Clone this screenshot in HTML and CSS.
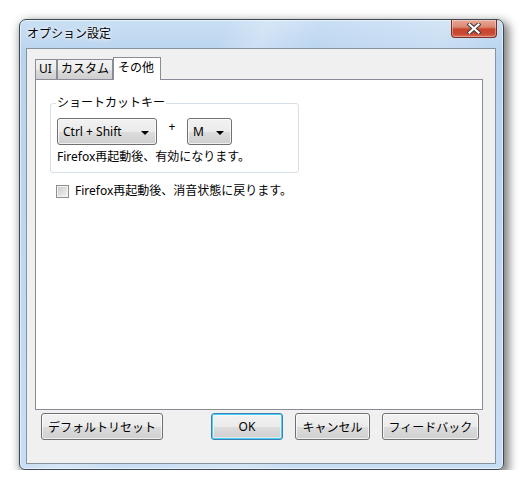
FILE: index.html
```html
<!DOCTYPE html>
<html lang="ja">
<head>
  <meta charset="UTF-8" />
  <title>オプション設定</title>
  <link rel="stylesheet" href="styles.css">
</head>
<body>
  <div class="window">
    <div class="titlebar">
      <span class="title">オプション設定</span>
      <button class="close" aria-label="閉じる">
        <svg width="14" height="11" viewBox="0 0 14 11">
          <path d="M2.5 1.5 L11.5 9.5 M11.5 1.5 L2.5 9.5" stroke="#3b3b3b" stroke-width="4.2" stroke-linecap="square"/>
          <path d="M2.5 1.5 L11.5 9.5 M11.5 1.5 L2.5 9.5" stroke="#ffffff" stroke-width="2.2" stroke-linecap="square"/>
        </svg>
      </button>
    </div>

    <div class="client">
      <div class="tabs">
        <div class="tab tab-ui">UI</div>
        <div class="tab tab-custom">カスタム</div>
        <div class="tab tab-other active">その他</div>
      </div>

      <div class="panel">
        <fieldset class="group">
          <legend>ショートカットキー</legend>
          <div class="keyRow">
            <div class="combo comboMod">Ctrl + Shift<span class="arrow"></span></div>
            <span class="plus">+</span>
            <div class="combo comboKey">M<span class="arrow"></span></div>
          </div>
          <p class="note">Firefox再起動後、有効になります。</p>
        </fieldset>

        <label class="check">
          <span class="box"></span>
          Firefox再起動後、消音状態に戻ります。
        </label>
      </div>

      <div class="footer">
        <button class="btn btnReset">デフォルトリセット</button>
        <button class="btn btnOk">OK</button>
        <button class="btn btnCancel">キャンセル</button>
        <button class="btn btnFeedback">フィードバック</button>
      </div>
    </div>
  </div>
</body>
</html>
```

FILE: styles.css
```css
* {
  margin: 0;
  padding: 0;
  box-sizing: border-box;
}

body {
  font-family: "Noto Sans", "Noto Sans CJK JP", sans-serif;
  font-size: 12px;
  color: #000000;
  background-color: #ffffff;
  padding: 19px 0 0 19px;
}

.window {
  display: flex;
  flex-direction: column;
  width: 485px;
  height: 451px;
  padding: 0 7px 5px 6px;
  border: 1px solid #3d4854;
  border-radius: 7px 7px 6px 6px;
  background:
    linear-gradient(115deg, rgba(255,255,255,0) 30%, rgba(255,255,255,0.25) 36%, rgba(255,255,255,0) 44%, rgba(255,255,255,0.2) 62%, rgba(255,255,255,0) 70%),
    linear-gradient(180deg, #c9dff4 0%, #b9d3ee 8%, #c0d8f1 60%, #c8def4 100%);
  box-shadow: inset 0 0 0 1px rgba(255,255,255,0.55), 3px 4px 10px 2px rgba(0,0,0,0.5);
}

.titlebar {
  display: flex;
  justify-content: space-between;
  height: 28px;
}

.title {
  padding: 6px 0 0 1px;
  line-height: 16px;
  text-shadow: 0 0 6px rgba(255,255,255,0.9), 0 0 3px #ffffff;
}

.close {
  display: flex;
  justify-content: center;
  align-items: center;
  width: 46px;
  height: 18px;
  margin-right: -1px;
  border: 1px solid #7a3024;
  border-top: none;
  border-radius: 0 0 4px 4px;
  background: linear-gradient(180deg, #e9a796 0%, #dc8a74 40%, #c8452c 55%, #c94a31 80%, #d56c54 100%);
  box-shadow: inset 0 0 0 1px rgba(255,255,255,0.35);
}

.client {
  flex-grow: 1;
  display: flex;
  flex-direction: column;
  padding: 8px 12px 23px 8px;
  border: 1px solid #85929f;
  background-color: #f0f0f0;
}

.tabs {
  display: flex;
  align-items: flex-end;
  height: 22px;
}

.tab {
  height: 20px;
  line-height: 18px;
  padding-left: 3px;
  border: 1px solid #898c95;
  border-bottom: none;
  background: linear-gradient(180deg, #f2f2f2 0%, #ebebeb 50%, #dddddd 51%, #cfcfcf 100%);
  position: relative;
}

.tab-ui {
  width: 22px;
}

.tab-custom {
  width: 56px;
}

.tab-other {
  width: 48px;
}

.tab.active {
  height: 23px;
  margin-bottom: -1px;
  padding-left: 4px;
  line-height: 19px;
  background: #ffffff;
  z-index: 1;
}

.panel {
  flex-grow: 1;
  padding: 16px 0 0 14px;
  border: 1px solid #898c95;
  background-color: #ffffff;
}

.group {
  width: 249px;
  height: 77px;
  padding: 0 6px 0 6px;
  border: 1px solid #d5dfe5;
  border-radius: 3px;
}

.group legend {
  margin-left: -1px;
  padding: 0 1px;
  line-height: 14px;
}

.keyRow {
  display: flex;
  align-items: flex-start;
  margin-top: 8px;
}

.combo {
  display: flex;
  align-items: center;
  justify-content: space-between;
  height: 27px;
  padding: 0 7px 0 5px;
  border: 1px solid #707070;
  border-radius: 3px;
  background: linear-gradient(180deg, #f2f2f2 0%, #ebebeb 50%, #dddddd 51%, #cfcfcf 100%);
  box-shadow: inset 0 0 0 1px rgba(255,255,255,0.7);
}

.comboMod {
  width: 100px;
}

.comboKey {
  width: 45px;
}

.arrow {
  width: 0;
  height: 0;
  margin-top: 2px;
  border-left: 4px solid transparent;
  border-right: 4px solid transparent;
  border-top: 4px solid #000000;
}

.plus {
  width: 30px;
  text-align: center;
  line-height: 14px;
  margin-top: 2px;
}

.note {
  margin-top: 5px;
  line-height: 14px;
}

.check {
  display: flex;
  align-items: center;
  gap: 6px;
  margin: 11px 0 0 6px;
  line-height: 14px;
}

.box {
  width: 13px;
  height: 13px;
  border: 1px solid #8e8f8f;
  background: linear-gradient(135deg, #cbcbcb 0%, #e3e3e3 60%, #f4f4f4 100%);
  box-shadow: inset 0 0 0 1px #f4f4f4;
}

.footer {
  display: flex;
  margin-top: 3px;
  padding: 0 4px 0 6px;
}

.btn {
  height: 27px;
  font-family: inherit;
  font-size: 12px;
  color: #000000;
  border: 1px solid #707070;
  border-radius: 3px;
  background: linear-gradient(180deg, #f2f2f2 0%, #ebebeb 50%, #dddddd 51%, #cfcfcf 100%);
  box-shadow: inset 0 0 0 1px rgba(255,255,255,0.7);
}

.btnReset {
  width: 122px;
}

.btnOk {
  width: 72px;
  margin-left: auto;
  border-color: #3c7fb1;
  box-shadow: inset 0 0 0 1px #48d0f8, inset 0 0 0 2px rgba(255,255,255,0.5);
}

.btnCancel {
  width: 75px;
  margin-left: 12px;
}

.btnFeedback {
  width: 97px;
  margin-left: 12px;
}
```
